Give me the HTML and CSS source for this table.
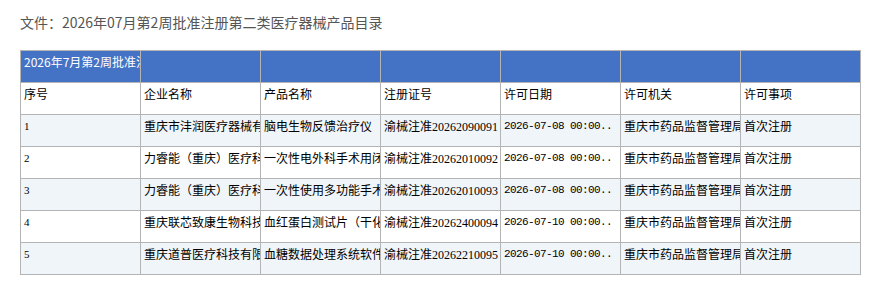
FILE: index.html
```html
<!DOCTYPE html>
<html lang="zh-CN">
<head>
<meta charset="utf-8">
<title>产品目录</title>
<link rel="stylesheet" href="styles.css">
</head>
<body>
<div class="page">
  <div class="doc-title">文件：2026年07月第2周批准注册第二类医疗器械产品目录</div>
  <table class="sheet">
    <colgroup>
      <col class="c"><col class="c"><col class="c"><col class="c"><col class="c"><col class="c"><col class="c">
    </colgroup>
    <tr class="band">
      <td>2026年7月第2周批准注册第二类医疗器械产品目录</td>
      <td></td><td></td><td></td><td></td><td></td><td></td>
    </tr>
    <tr class="head">
      <td>序号</td><td>企业名称</td><td>产品名称</td><td>注册证号</td><td>许可日期</td><td>许可机关</td><td>许可事项</td>
    </tr>
    <tr class="alt">
      <td class="num">1</td>
      <td>重庆市沣润医疗器械有限公司</td>
      <td>脑电生物反馈治疗仪</td>
      <td>渝械注准<span class="num">20262090091</span></td>
      <td class="date">2026-07-08 00:00..</td>
      <td>重庆市药品监督管理局</td>
      <td>首次注册</td>
    </tr>
    <tr>
      <td class="num">2</td>
      <td>力睿能（重庆）医疗科技有限公司</td>
      <td>一次性电外科手术用闭合器</td>
      <td>渝械注准<span class="num">20262010092</span></td>
      <td class="date">2026-07-08 00:00..</td>
      <td>重庆市药品监督管理局</td>
      <td>首次注册</td>
    </tr>
    <tr class="alt">
      <td class="num">3</td>
      <td>力睿能（重庆）医疗科技有限公司</td>
      <td>一次性使用多功能手术电极</td>
      <td>渝械注准<span class="num">20262010093</span></td>
      <td class="date">2026-07-08 00:00..</td>
      <td>重庆市药品监督管理局</td>
      <td>首次注册</td>
    </tr>
    <tr>
      <td class="num">4</td>
      <td>重庆联芯致康生物科技有限公司</td>
      <td>血红蛋白测试片（干化学法）</td>
      <td>渝械注准<span class="num">20262400094</span></td>
      <td class="date">2026-07-10 00:00..</td>
      <td>重庆市药品监督管理局</td>
      <td>首次注册</td>
    </tr>
    <tr class="alt">
      <td class="num">5</td>
      <td>重庆道普医疗科技有限公司</td>
      <td>血糖数据处理系统软件</td>
      <td>渝械注准<span class="num">20262210095</span></td>
      <td class="date">2026-07-10 00:00..</td>
      <td>重庆市药品监督管理局</td>
      <td>首次注册</td>
    </tr>
  </table>
</div>
</body>
</html>
```

FILE: styles.css
```css
html, body {
  margin: 0;
  padding: 0;
  background: #ffffff;
}

.page {
  padding: 12px 20px;
  font-family: "Noto Sans CJK SC", "Liberation Sans", sans-serif;
}

.doc-title {
  font-size: 14px;
  line-height: 20px;
  color: #555555;
  margin-bottom: 18px;
}

.sheet {
  border-collapse: collapse;
  table-layout: fixed;
  width: 841px;
  font-size: 12px;
  color: #000000;
}

.sheet col.c {
  width: 120px;
}

.sheet td {
  border: 1px solid #b4b4b4;
  height: 32px;
  box-sizing: border-box;
  padding: 3px 2px 0 3px;
  line-height: 16px;
  vertical-align: top;
  white-space: nowrap;
  overflow: hidden;
  font-family: "Noto Sans CJK SC", sans-serif;
}

.sheet tr.band td {
  background: #4472c4;
  color: #ffffff;
}

.sheet tr.alt td {
  background: #f0f5fa;
}

.sheet .num {
  font-family: "Liberation Serif", "Noto Sans CJK SC", serif;
  font-size: 12px;
}

.sheet td.num {
  font-size: 11px;
}

.sheet td.date {
  font-family: "Liberation Mono", monospace;
  font-size: 11px;
  letter-spacing: -0.6px;
}
```
